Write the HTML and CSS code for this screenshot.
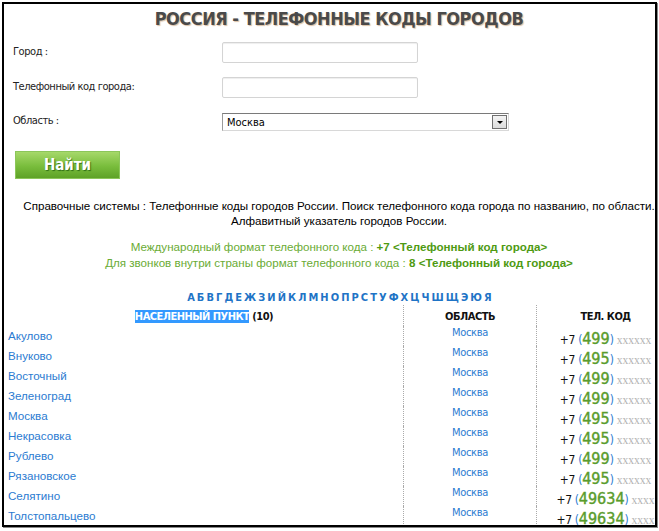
FILE: index.html
```html
<!DOCTYPE html>
<html lang="ru">
<head>
    <meta charset="UTF-8">
    <title>Россия - телефонные коды городов</title>
    <link rel="stylesheet" href="styles.css">
</head>
<body>
    <div class="frame">
        <div class="content">
            <h1 class="title">РОССИЯ - ТЕЛЕФОННЫЕ КОДЫ ГОРОДОВ</h1>

            <form class="search">
                <div class="field">
                    <label>Город :</label>
                    <input class="text-input" type="text">
                </div>
                <div class="field">
                    <label>Телефонный код города:</label>
                    <input class="text-input" type="text">
                </div>
                <div class="field field-select">
                    <label>Область :</label>
                    <div class="select">
                        <span>Москва</span>
                        <span class="select-arrow"></span>
                    </div>
                </div>
                <button class="find-button" type="button">Найти</button>
            </form>

            <p class="about">
                Справочные системы : Телефонные коды городов России. Поиск телефонного кода города по названию, по области.<br>
                Алфавитный указатель городов России.
            </p>

            <p class="format">
                Международный формат телефонного кода : <b>+7 &lt;Телефонный код города&gt;</b><br>
                Для звонков внутри страны формат телефонного кода : <b>8 &lt;Телефонный код города&gt;</b>
            </p>

            <div class="alphabet">
                <a>А</a> <a>Б</a> <a>В</a> <a>Г</a> <a>Д</a> <a>Е</a> <a>Ж</a> <a>З</a> <a>И</a> <a>Й</a> <a>К</a> <a>Л</a> <a>М</a> <a>Н</a> <a>О</a> <a>П</a> <a>Р</a> <a>С</a> <a>Т</a> <a>У</a> <a>Ф</a> <a>Х</a> <a>Ц</a> <a>Ч</a> <a>Ш</a> <a>Щ</a> <a>Э</a> <a>Ю</a> <a>Я</a>
            </div>

            <table class="codes">
                <thead>
                    <tr>
                        <th class="col-city"><span class="selected">НАСЕЛЕННЫЙ ПУНКТ</span> (10)</th>
                        <th class="col-region">ОБЛАСТЬ</th>
                        <th class="col-code">ТЕЛ. КОД</th>
                    </tr>
                </thead>
                <tbody id="rows"></tbody>
            </table>
        </div>
    </div>

    <script>
        const cities = [
            ['Акулово', '499', 'xxxxxx'],
            ['Внуково', '495', 'xxxxxx'],
            ['Восточный', '499', 'xxxxxx'],
            ['Зеленоград', '499', 'xxxxxx'],
            ['Москва', '495', 'xxxxxx'],
            ['Некрасовка', '495', 'xxxxxx'],
            ['Рублево', '499', 'xxxxxx'],
            ['Рязановское', '495', 'xxxxxx'],
            ['Селятино', '49634', 'xxxx'],
            ['Толстопальцево', '49634', 'xxxx']
        ];

        const rows = document.getElementById('rows');
        cities.forEach(([name, code, rest]) => {
            const tr = document.createElement('tr');
            tr.innerHTML = `
                <td class="col-city"><a>${name}</a></td>
                <td class="col-region"><a>Москва</a></td>
                <td class="col-code">+7 <span class="paren">(</span><span class="area">${code}</span><span class="paren">)</span> <span class="rest">${rest}</span></td>`;
            rows.appendChild(tr);
        });
    </script>
</body>
</html>
```

FILE: styles.css
```css
/* Page frame */
body {
    margin: 0;
    background: #fff;
    font-family: "Liberation Sans", Arial, sans-serif;
    font-size: 11.6px;
    color: #000;
}

.frame {
    margin: 2px;
    width: 651px;
    height: 521px;
    border: 2px solid #000;
    box-shadow: 1px 1px 0 #888;
    overflow: hidden;
}

.content {
    width: 670px;
}

.title {
    margin: 4px 0 0;
    font-family: "DejaVu Sans Condensed", "DejaVu Sans", sans-serif;
    font-size: 18px;
    line-height: 22px;
    font-weight: bold;
    letter-spacing: -0.5px;
    text-align: center;
    color: #4a4a4a;
    text-shadow: 1px 1px 1px rgba(170, 110, 50, 0.45);
}

/* Search form */
.search {
    margin: 12px 0 0;
    padding-left: 9px;
}

.field {
    display: grid;
    grid-template-columns: 209px auto;
    align-items: center;
    margin-bottom: 14px;
    font-family: "DejaVu Sans Condensed", "DejaVu Sans", sans-serif;
    font-size: 11px;
    letter-spacing: -0.45px;
    color: #222;
}

.field label {
    padding-bottom: 3px;
}

.field-select {
    padding-top: 1px;
    margin-bottom: 20px;
}

.text-input {
    width: 196px;
    height: 21px;
    box-sizing: border-box;
    margin: 0;
    border: 1px solid #d4d4d4;
    border-radius: 2px;
    box-shadow: inset 0 1px 1px #eee;
    background: #fff;
}

.select {
    width: 287px;
    height: 18px;
    box-sizing: border-box;
    display: flex;
    align-items: center;
    justify-content: space-between;
    padding-left: 4px;
    border: 1px solid #9a9a9a;
    border-top-color: #7a7a7a;
    border-right-color: #d8d8d8;
    border-bottom-color: #d8d8d8;
    letter-spacing: 0;
    color: #000;
}

.select-arrow {
    width: 15px;
    height: 14px;
    margin-right: 1px;
    box-sizing: border-box;
    border: 1px solid #707070;
    background: linear-gradient(#f4f4f4, #dcdcdc);
    display: flex;
    align-items: center;
    justify-content: center;
}

.select-arrow::after {
    content: "";
    border-left: 3px solid transparent;
    border-right: 3px solid transparent;
    border-top: 3px solid #000;
}

.find-button {
    display: block;
    margin: 0 0 0 2px;
    width: 105px;
    height: 28px;
    border: 1px solid #8cc65a;
    background: linear-gradient(#a6d86a, #79bd3c 55%, #5ea227);
    color: #fff;
    font-family: "DejaVu Sans Condensed", "DejaVu Sans", sans-serif;
    font-size: 15px;
    font-weight: bold;
    text-shadow: 1px 1px 1px rgba(0, 60, 0, 0.6);
    cursor: pointer;
}

/* Info text */
.about {
    margin: 19px 0 0;
    line-height: 15px;
    text-align: center;
}

.format {
    margin: 11px 0 0;
    line-height: 16px;
    text-align: center;
    color: #6aab34;
}

.format b {
    color: #4e9a12;
}

.alphabet {
    margin-top: 20px;
    line-height: 14px;
    text-align: center;
    font-family: "DejaVu Sans Condensed", "DejaVu Sans", sans-serif;
    font-size: 11px;
    font-weight: bold;
    letter-spacing: -0.7px;
}

.alphabet a {
    color: #1f74c6;
}

/* Codes table */
.codes {
    margin-left: 1px;
    width: 669px;
    border-collapse: collapse;
}

.codes th {
    height: 19px;
    padding: 2px 0 0;
    font-family: "DejaVu Sans Condensed", "DejaVu Sans", sans-serif;
    font-size: 11px;
    font-weight: bold;
    letter-spacing: -0.5px;
    color: #111;
    vertical-align: middle;
}

.selected {
    background: #3399ff;
    color: #fff;
}

.codes td {
    height: 20px;
    padding: 0;
    vertical-align: top;
    line-height: 20px;
}

.col-city {
    width: 395px;
    text-align: left;
}

th.col-city {
    text-align: center;
}

td.col-city {
    padding-left: 3px;
}

.col-region {
    width: 132px;
    text-align: center;
    border-left: 1px dotted #aaa;
}

.col-code {
    text-align: center;
    border-left: 1px dotted #aaa;
}

td.col-city a,
td.col-region a {
    color: #2b7bd1;
}

td.col-region {
    font-family: "DejaVu Sans Condensed", "DejaVu Sans", sans-serif;
    font-size: 11px;
    letter-spacing: -0.3px;
    line-height: 14px;
}

.codes td.col-code {
    height: 12px;
    padding-top: 8px;
    line-height: 12px;
    font-family: "DejaVu Sans Condensed", "DejaVu Sans", sans-serif;
    font-size: 12px;
    letter-spacing: -0.3px;
    color: #111;
    white-space: nowrap;
}

.paren {
    color: #2b7bd1;
}

.area {
    font-size: 16px;
    line-height: 10px;
    letter-spacing: 0;
    color: #5a9c2c;
    -webkit-text-stroke: 0.4px #5a9c2c;
}

.rest {
    font-family: "Liberation Serif", serif;
    font-size: 11.5px;
    letter-spacing: 0;
    color: #b4b4b4;
}
```
